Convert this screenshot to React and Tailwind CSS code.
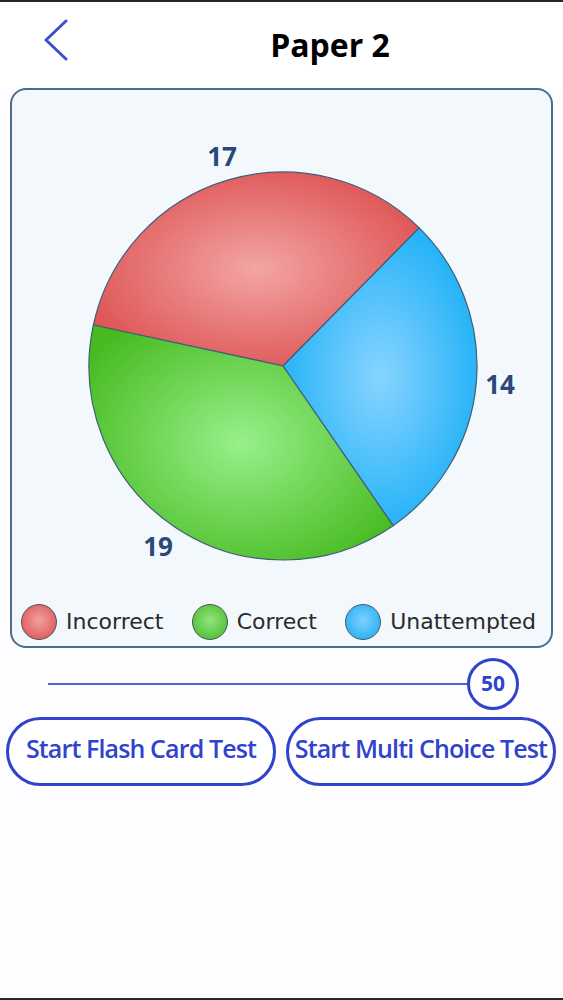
import React from "react";

const CX = 271;
const CY = 276;
const R = 194;

function slicePath(a0, a1) {
  const rad = (d) => (d * Math.PI) / 180;
  const x0 = CX + R * Math.cos(rad(a0));
  const y0 = CY + R * Math.sin(rad(a0));
  const x1 = CX + R * Math.cos(rad(a1));
  const y1 = CY + R * Math.sin(rad(a1));
  const large = a1 - a0 > 180 ? 1 : 0;
  return `M ${CX} ${CY} L ${x0.toFixed(2)} ${y0.toFixed(2)} A ${R} ${R} 0 ${large} 1 ${x1.toFixed(2)} ${y1.toFixed(2)} Z`;
}

const data = [
  { value: 17, grad: "gRed" },
  { value: 14, grad: "gBlue" },
  { value: 19, grad: "gGreen" },
];

function Pie() {
  const total = data.reduce((s, d) => s + d.value, 0);
  let a = 192.2;
  const slices = data.map((d) => {
    const span = (d.value / total) * 360;
    const p = slicePath(a, a + span);
    a += span;
    return { ...d, p };
  });
  return (
    <svg width="539" height="500" viewBox="0 0 539 500" className="block">
      <defs>
        <radialGradient id="gRed" cx="50%" cy="50%" r="62%">
          <stop offset="0%" stopColor="#f3a5a5" />
          <stop offset="100%" stopColor="#dc4c4c" />
        </radialGradient>
        <radialGradient id="gBlue" cx="50%" cy="50%" r="62%">
          <stop offset="0%" stopColor="#88d4ff" />
          <stop offset="100%" stopColor="#12acf6" />
        </radialGradient>
        <radialGradient id="gGreen" cx="50%" cy="50%" r="62%">
          <stop offset="0%" stopColor="#97f08a" />
          <stop offset="100%" stopColor="#47ba20" />
        </radialGradient>
      </defs>
      {slices.map((s, i) => (
        <path key={i} d={s.p} fill={`url(#${s.grad})`} stroke="#3f5f78" strokeWidth="1.2" strokeLinejoin="round" />
      ))}
      <text x="210" y="76" textAnchor="middle" className="font-['Open_Sans'] font-bold text-[26px] fill-[#2a4878]">17</text>
      <text x="488" y="304" textAnchor="middle" className="font-['Open_Sans'] font-bold text-[26px] fill-[#2a4878]">14</text>
      <text x="146" y="466" textAnchor="middle" className="font-['Open_Sans'] font-bold text-[26px] fill-[#2a4878]">19</text>
    </svg>
  );
}

function LegendItem({ dotClass, label }) {
  return (
    <div className="flex items-center gap-[9px]">
      <div className={`w-[36px] h-[36px] rounded-full border-[1.5px] border-[#465560] ${dotClass}`} />
      <span className="font-['DejaVu_Sans',sans-serif] text-[22px] leading-none text-[#2a2a2a]">{label}</span>
    </div>
  );
}

export default function App() {
  return (
    <div className="h-[1000px] w-full bg-[#fdfcff] border-t-2 border-b-2 border-[#262626] font-['Open_Sans',sans-serif]">
      <div className="h-[86px] flex items-center bg-white">
        <div className="w-[97px] pl-[43px] -mt-[10px]">
          <svg width="26" height="42" viewBox="0 0 26 42" fill="none">
            <path d="M23 2 L3 21 L23 40" stroke="#3b4fd1" strokeWidth="3" strokeLinecap="round" strokeLinejoin="round" />
          </svg>
        </div>
        <div className="flex-1 text-center text-[32px] font-bold leading-none text-black">Paper 2</div>
      </div>

      <div className="mx-[10px] rounded-[16px] border-2 border-[#4d6d8c] bg-[#f3f8fc]">
        <Pie />
        <div className="mt-[14px] h-[36px] flex items-center justify-between pl-[9px] pr-[15px] mb-[6px]">
          <LegendItem dotClass="bg-[radial-gradient(circle_at_50%_45%,#f4a0a0,#d84a4a)]" label="Incorrect" />
          <LegendItem dotClass="bg-[radial-gradient(circle_at_50%_45%,#8fe67c,#44b522)]" label="Correct" />
          <LegendItem dotClass="bg-[radial-gradient(circle_at_50%_45%,#7fd0ff,#14a9f2)]" label="Unattempted" />
        </div>
      </div>

      <div className="mt-[10px] h-[52px] flex items-center pl-[48px] pr-[44px]">
        <div className="flex-1 h-[2px] bg-[#5062d4]" />
        <div className="w-[52px] h-[52px] rounded-full border-[3px] border-[#2f43cc] bg-white flex items-center justify-center text-[21px] font-bold text-[#2f43cc]">
          50
        </div>
      </div>

      <div className="mt-[7px] grid grid-cols-2 gap-[10px] pl-[6px] pr-[7px]">
        <button className="h-[69px] pb-[5px] rounded-full border-[3px] border-[#2f43cc] bg-white text-[25px] font-semibold tracking-[-0.035em] text-[#2f43cc]">
          Start Flash Card Test
        </button>
        <button className="h-[69px] pb-[5px] rounded-full border-[3px] border-[#2f43cc] bg-white text-[25px] font-semibold tracking-[-0.035em] text-[#2f43cc] whitespace-nowrap">
          Start Multi Choice Test
        </button>
      </div>
    </div>
  );
}
